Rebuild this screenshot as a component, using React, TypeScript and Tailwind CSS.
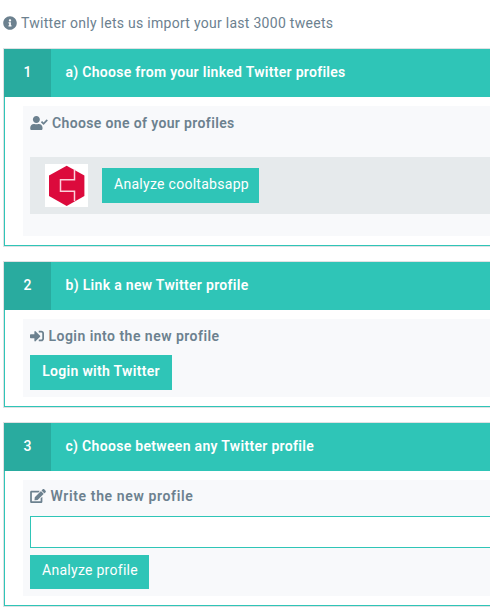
import type { ReactNode } from "react";
import { FaEdit, FaInfoCircle, FaSignInAlt, FaUserCheck } from "react-icons/fa";

type PanelProps = {
    step: number;
    title: string;
    titleClass: string;
    className: string;
    children: ReactNode;
};

const Panel = ({ step, title, titleClass, className, children }: PanelProps) => (
    <section className={`flex flex-col border border-r-0 border-[#2fc5b7] shadow-[0_0_0_1px_#dfe1e3] ${className}`}>

        {/* Header */}
        <header className="-ml-px -mt-px flex h-12 shrink-0 bg-[#2fc5b7] font-semibold leading-[47px] text-white">
            <span className="w-[47px] bg-[#29ab9f] text-center font-medium">{step}</span>
            <h2 className={`pl-[14.5px] ${titleClass}`}>{title}</h2>
        </header>

        {/* Body */}
        <div className="grow py-[9px] pl-[18px]">
            <div className="h-full bg-[#f8f9fb] pl-[7px]">{children}</div>
        </div>

    </section>
);

const Logo = () => (
    <svg viewBox="0 0 43 43" className="h-[43px] w-[43px] bg-white" aria-label="cooltabsapp">
        <path d="M21.7 1.7 39.4 11.5V32L21.7 42 4 32V11.5Z" fill="#dc0a3c" />
        <path d="M29.5 5.5V15.8H15.5V27.3H29.5V37" fill="none" stroke="#fbd0da" strokeWidth="1.5" />
    </svg>
);

const App = () => {
    return (
        <main className="h-[613px] overflow-hidden whitespace-nowrap bg-white pl-1 font-[Roboto,sans-serif] text-sm text-[#6c818f]">

            {/* Import limit notice */}
            <p className="-ml-px flex h-[49px] items-center gap-1 pb-[3px]">
                <FaInfoCircle className="h-3.5 w-3.5" />
                <span className="tracking-[0.28px]">Twitter only lets us import your last 3000 tweets</span>
            </p>

            <div className="flex flex-col gap-4">

                <Panel step={1} title="a) Choose from your linked Twitter profiles" titleClass="tracking-[0.29px]" className="h-[197px]">
                    <h3 className="flex h-[51px] items-start gap-1 pt-[7px] font-semibold">
                        <FaUserCheck className="mt-[3px] h-3.5 w-[18px]" />
                        <span className="tracking-[0.36px]">Choose one of your profiles</span>
                    </h3>
                    <div className="flex h-[57px] items-center bg-[#e6eaec] pl-[15px]">
                        <Logo />
                        <button className="ml-3.5 h-[35px] w-[157px] bg-[#2fc5b7] pb-[3px] pl-[2px] tracking-[0.28px] text-white">
                            Analyze cooltabsapp
                        </button>
                    </div>
                </Panel>

                <Panel step={2} title="b) Link a new Twitter profile" titleClass="tracking-[0.31px]" className="h-[145px]">
                    <h3 className="flex h-9 items-start gap-[4.5px] pt-[7px] font-semibold">
                        <FaSignInAlt className="mt-[3px] h-3.5 w-3.5" />
                        <span className="tracking-[0.47px]">Login into the new profile</span>
                    </h3>
                    <button className="block h-[35px] w-[142px] bg-[#2fc5b7] pb-[3px] font-semibold tracking-[0.3px] text-white">
                        Login with Twitter
                    </button>
                </Panel>

                <Panel step={3} title="c) Choose between any Twitter profile" titleClass="tracking-[0.31px]" className="h-[183px]">
                    <h3 className="flex h-9 items-start gap-[4.5px] pt-[6px] font-semibold">
                        <FaEdit className="mt-[3px] h-3.5 w-4" />
                        <span className="tracking-[0.63px]">Write the new profile</span>
                    </h3>
                    <input className="block h-8 w-full border border-r-0 border-[#2fc5b7] bg-white px-3 outline-none" aria-label="Profile" />
                    <button className="mt-[7px] block h-[34px] w-[119px] bg-[#2fc5b7] pb-1 pl-px tracking-[0.27px] text-white">
                        Analyze profile
                    </button>
                </Panel>

            </div>

        </main>
    );
};

export default App;
